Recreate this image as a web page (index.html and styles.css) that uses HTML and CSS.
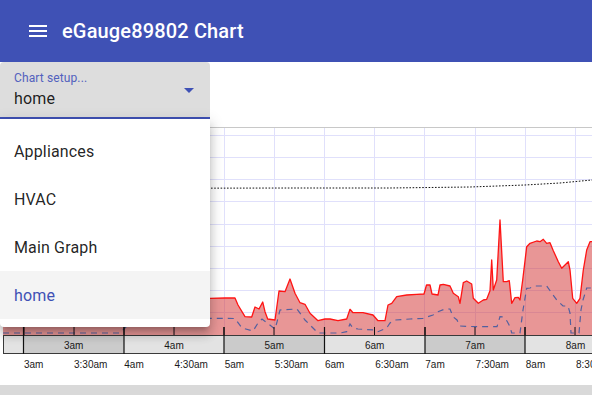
FILE: index.html
```html
<!DOCTYPE html>
<html lang="en">
<head>
<meta charset="utf-8">
<title>eGauge89802 Chart</title>
<link rel="stylesheet" href="styles.css">
</head>
<body>
<header class="appbar">
  <svg class="menu-icon" viewBox="0 0 24 24" width="24" height="24"><path d="M3 18h18v-2H3v2zm0-5h18v-2H3v2zm0-7v2h18V6H3z"/></svg>
  <h1 class="title">eGauge89802 Chart</h1>
</header>
<main class="content">
  <div class="select">
    <div class="select-text">
      <span class="select-label">Chart setup...</span>
      <span class="select-value">home</span>
    </div>
    <svg class="select-arrow" viewBox="0 0 24 24" width="24" height="24"><path d="M7 10l5 5 5-5z"/></svg>
  </div>
  <svg class="chart" viewBox="0 119 592 266" width="592" height="266">
    <g class="grid">
      <path d="M24.5 127V335M74.5 127V335M124.5 127V335M174.5 127V335M224.5 127V335M274.5 127V335M324.5 127V335M374.5 127V335M424.5 127V335M475.5 127V335M525.5 127V335M575.5 127V335"/>
      <path d="M3 135.5H592M3 157.5H592M3 179.5H592M3 201.5H592M3 224.5H592M3 246.5H592M3 268.5H592M3 290.5H592M3 312.5H592"/>
    </g>
    <path class="topline" d="M3 127.5H592"/>
    <polyline class="dotted" points="3,188.5 300,188 390,188 470,187 525,185 560,183 592,180"/>
    <polygon class="area" points="3,335 3,300 50,296 100,300 150,297 200,298 210,298.3 225,298 235,298 238,305 245,316.7 251.7,317 255,307 259,309 262.7,302 265,311.7 267.7,319 275,320 279,291 285,291.7 290,279 295,293.3 300,302.7 305,304.3 310,313.3 318,320.7 325,319 330,319 338,320.7 346.7,319 350,309.3 353,312.7 363,312.7 373,315 378,320.7 385,320.7 388,305 391.7,303.3 396.7,296.7 406.7,295 416.7,294.3 424,294 426.5,285 430,285 432,294 438,295 440,285 443.3,284.3 450,286 453.3,293.3 458.3,296.7 460,303.3 463.3,282.7 466.7,281 471.7,284 473.3,298.3 478.3,303.3 483.3,300 486.7,299.3 490,290.7 491.7,260 493.3,290 496.7,280 500,220 503.3,281.7 506.7,281.7 509.3,280.7 511.7,303.3 515,297.7 518.3,297.3 520,300 522.7,280 526.7,246.7 530,243.3 536.7,241 540,241.7 543.3,239.3 546.7,243.3 550,242.7 553.3,250.7 558.3,261.7 561.7,268.3 565,265 568.3,261.7 570,270 572.7,298.3 576.7,303.3 580,298.3 583.3,270 586.7,250 590,241.7 592,241.7 592,335"/>
    <polyline class="red" points="3,300 50,296 100,300 150,297 200,298 210,298.3 225,298 235,298 238,305 245,316.7 251.7,317 255,307 259,309 262.7,302 265,311.7 267.7,319 275,320 279,291 285,291.7 290,279 295,293.3 300,302.7 305,304.3 310,313.3 318,320.7 325,319 330,319 338,320.7 346.7,319 350,309.3 353,312.7 363,312.7 373,315 378,320.7 385,320.7 388,305 391.7,303.3 396.7,296.7 406.7,295 416.7,294.3 424,294 426.5,285 430,285 432,294 438,295 440,285 443.3,284.3 450,286 453.3,293.3 458.3,296.7 460,303.3 463.3,282.7 466.7,281 471.7,284 473.3,298.3 478.3,303.3 483.3,300 486.7,299.3 490,290.7 491.7,260 493.3,290 496.7,280 500,220 503.3,281.7 506.7,281.7 509.3,280.7 511.7,303.3 515,297.7 518.3,297.3 520,300 522.7,280 526.7,246.7 530,243.3 536.7,241 540,241.7 543.3,239.3 546.7,243.3 550,242.7 553.3,250.7 558.3,261.7 561.7,268.3 565,265 568.3,261.7 570,270 572.7,298.3 576.7,303.3 580,298.3 583.3,270 586.7,250 590,241.7 592,241.7"/>
    <polyline class="blue" points="3,333 120,333 135,318 235,318.5 242,328 253,331 258,323 262,319 275,329 277,322 280,310 297,309 305,320 312,327 318,333 340,333 346.7,331.7 350,324 353,328 358,329 375,330 378,331.7 386.7,328 390,323 395,320 410,319 423,318.3 433,315 438,311.7 445,309 450,309 453,316.7 457,320 460,326 475,326.7 497,326.7 500,316.7 503,317 507,321 510,326.7 511.7,333 520,333 523,310 526.7,288.3 530,288 535,286 546.7,286 551.7,293 556.7,300 563,306 568,306 570,313 571,333 579,333 581,310 583,300 586.7,288 592,288"/>
    <path class="ticks" d="M24 327V335M74 327V335M124 327V335M174 327V335M224 327V335M274 327V335M324.5 327V335M374.5 327V335M425 327V335M475 327V335M525 327V335M575 327V335"/>
    <g class="nav">
      <rect class="seg-light" x="3" y="335" width="20.5" height="19"/>
      <rect class="seg-dark" x="23.5" y="335" width="100.5" height="19"/>
      <rect class="seg-light" x="124" y="335" width="100" height="19"/>
      <rect class="seg-dark" x="224" y="335" width="100.5" height="19"/>
      <rect class="seg-light" x="324.5" y="335" width="100.5" height="19"/>
      <rect class="seg-dark" x="425" y="335" width="100" height="19"/>
      <rect class="seg-light" x="525" y="335" width="67" height="19"/>
      <path class="nav-border" d="M3 335.5H592M3 353.5H592M3.5 335V354"/>
      <path class="nav-sep" d="M23.5 327V354M124 327V354M224 327V354M324.5 327V354M425 327V354M525 327V354"/>
      <text class="axis-label mid" x="73.7" y="348.5">3am</text>
      <text class="axis-label mid" x="174" y="348.5">4am</text>
      <text class="axis-label mid" x="274.3" y="348.5">5am</text>
      <text class="axis-label mid" x="374.7" y="348.5">6am</text>
      <text class="axis-label mid" x="475" y="348.5">7am</text>
      <text class="axis-label mid" x="575.5" y="348.5">8am</text>
    </g>
    <g class="labels">
      <text class="axis-label" x="24" y="367.5">3am</text>
      <text class="axis-label" x="74" y="367.5">3:30am</text>
      <text class="axis-label" x="124.3" y="367.5">4am</text>
      <text class="axis-label" x="174.5" y="367.5">4:30am</text>
      <text class="axis-label" x="224.7" y="367.5">5am</text>
      <text class="axis-label" x="274.8" y="367.5">5:30am</text>
      <text class="axis-label" x="325" y="367.5">6am</text>
      <text class="axis-label" x="375.2" y="367.5">6:30am</text>
      <text class="axis-label" x="425.3" y="367.5">7am</text>
      <text class="axis-label" x="475.6" y="367.5">7:30am</text>
      <text class="axis-label" x="525.8" y="367.5">8am</text>
      <text class="axis-label" x="576" y="367.5">8:30am</text>
    </g>
  </svg>
  <div class="scrollbar"></div>
</main>
<ul class="menu">
  <li class="menu-item">Appliances</li>
  <li class="menu-item">HVAC</li>
  <li class="menu-item">Main Graph</li>
  <li class="menu-item selected">home</li>
</ul>
</body>
</html>
```
FILE: styles.css
```css
html, body {
  margin: 0;
  padding: 0;
  background: #ffffff;
  overflow: hidden;
}
body {
  font-family: Roboto, "Liberation Sans", Arial, sans-serif;
  width: 592px;
  height: 406px;
  position: relative;
}
.appbar {
  height: 62px;
  background: #3f51b5;
  color: #ffffff;
  display: flex;
  align-items: center;
  padding-left: 26px;
  box-sizing: border-box;
}
.menu-icon {
  fill: #ffffff;
  flex: none;
}
.title {
  margin: 0 0 0 12px;
  font-size: 20px;
  font-weight: 500;
  letter-spacing: 0.0075em;
  line-height: 1.6;
}
.content {
  display: flex;
  flex-direction: column;
}
.select {
  width: 210px;
  height: 57px;
  box-sizing: border-box;
  background: #dddddd;
  border-radius: 4px 4px 0 0;
  border-bottom: 2px solid #3f51b5;
  display: flex;
  align-items: center;
}
.select-text {
  flex: 1;
  display: flex;
  flex-direction: column;
  padding-left: 14px;
  gap: 4px;
  padding-bottom: 1px;
}
.select-label {
  font-size: 12px;
  line-height: 14px;
  color: #5261be;
  letter-spacing: 0.01em;
}
.select-value {
  font-size: 16px;
  line-height: 19px;
  color: rgba(0,0,0,0.87);
  letter-spacing: 0.00938em;
}
.select-arrow {
  fill: #3f51b5;
  margin-right: 9px;
  flex: none;
}
.chart {
  display: block;
}
.grid path {
  stroke: #e0e0fb;
  stroke-width: 1;
  fill: none;
}
.topline {
  stroke: #c8c8c8;
  stroke-width: 1;
}
.dotted {
  fill: none;
  stroke: #111111;
  stroke-width: 1;
  stroke-dasharray: 1.6 1.6;
}
.area {
  fill: rgb(209,45,45);
  fill-opacity: 0.5;
  stroke: none;
}
.red {
  fill: none;
  stroke: #ff1414;
  stroke-width: 1.3;
  stroke-linejoin: round;
}
.blue {
  fill: none;
  stroke: #52609f;
  stroke-width: 1.2;
  stroke-dasharray: 6 5;
}
.ticks {
  stroke: #111111;
  stroke-width: 1;
}
.seg-light {
  fill: #e3e3e3;
}
.seg-dark {
  fill: #cbcbcb;
}
.nav-border {
  stroke: #3a3a3a;
  stroke-width: 1;
  fill: none;
}
.nav-sep {
  stroke: #111111;
  stroke-width: 1.2;
}
.axis-label {
  font-family: "Liberation Sans", Arial, sans-serif;
  font-size: 10px;
  fill: #1a1a1a;
}
.axis-label.mid {
  text-anchor: middle;
}
.scrollbar {
  height: 10px;
  background: #d9d9d9;
}
.menu {
  position: absolute;
  top: 119px;
  left: 0;
  width: 210px;
  margin: 0;
  padding: 8px 0;
  list-style: none;
  background: #ffffff;
  border-radius: 0 0 4px 4px;
  box-shadow: 0px 5px 5px -3px rgba(0,0,0,0.2), 0px 8px 10px 1px rgba(0,0,0,0.14), 0px 3px 14px 2px rgba(0,0,0,0.12);
}
.menu-item {
  height: 48px;
  display: flex;
  align-items: center;
  padding-left: 14px;
  font-size: 16px;
  letter-spacing: 0.00938em;
  color: rgba(0,0,0,0.87);
}
.menu-item.selected {
  background: #f4f4f4;
  color: #3f51b5;
}
```
